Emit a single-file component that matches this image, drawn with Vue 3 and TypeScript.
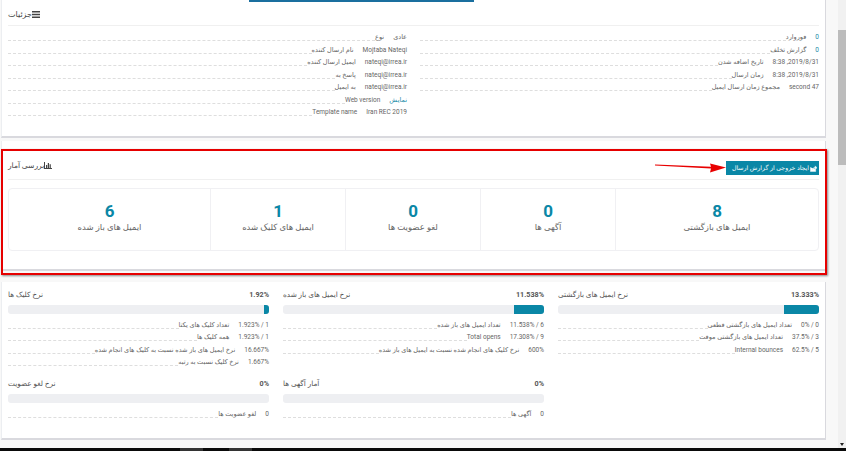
<script setup lang="ts">
interface Row { value: string; label: string; link?: boolean }
interface Metric { title: string; pct: string; fill: number; rows: Row[] }

const detailColumns: Row[][] = [
  [
    { value: '0', label: 'فوروارد', link: true },
    { value: '0', label: 'گزارش تخلف', link: true },
    { value: '2019/8/31, 8:38', label: 'تاریخ اضافه شدن' },
    { value: '2019/8/31, 8:38', label: 'زمان ارسال' },
    { value: '47 second', label: 'مجموع زمان ارسال ایمیل' },
  ],
  [
    { value: 'عادی', label: 'نوع' },
    { value: 'Mojtaba Nateqi', label: 'نام ارسال کننده' },
    { value: 'nateqi@irrea.ir', label: 'ایمیل ارسال کننده' },
    { value: 'nateqi@irrea.ir', label: 'پاسخ به' },
    { value: 'nateqi@irrea.ir', label: 'به ایمیل' },
    { value: 'نمایش', label: 'Web version', link: true },
    { value: 'Iran REC 2019', label: 'Template name' },
  ],
]

const stats = [
  { n: '8', label: 'ایمیل های بازگشتی' },
  { n: '0', label: 'آگهی ها' },
  { n: '0', label: 'لغو عضویت ها' },
  { n: '1', label: 'ایمیل های کلیک شده' },
  { n: '6', label: 'ایمیل های باز شده' },
]

const metrics: Metric[] = [
  {
    title: 'نرخ ایمیل های بازگشتی', pct: '13.333%', fill: 13.333,
    rows: [
      { value: '0 / 0%', label: 'تعداد ایمیل های بازگشتی قطعی' },
      { value: '3 / 37.5%', label: 'تعداد ایمیل های بازگشتی موقت' },
      { value: '5 / 62.5%', label: 'Internal bounces' },
    ],
  },
  {
    title: 'نرخ ایمیل های باز شده', pct: '11.538%', fill: 11.538,
    rows: [
      { value: '6 / 11.538%', label: 'تعداد ایمیل های باز شده' },
      { value: '9 / 17.308%', label: 'Total opens' },
      { value: '600%', label: 'نرخ کلیک های انجام شده نسبت به ایمیل های باز شده' },
    ],
  },
  {
    title: 'نرخ کلیک ها', pct: '1.92%', fill: 1.92,
    rows: [
      { value: '1 / 1.923%', label: 'تعداد کلیک های یکتا' },
      { value: '1 / 1.923%', label: 'همه کلیک ها' },
      { value: '16.667%', label: 'نرخ ایمیل های باز شده نسبت به کلیک های انجام شده' },
      { value: '1.667%', label: 'نرخ کلیک نسبت به رتبه' },
    ],
  },
]

const lowerMetrics: (Metric | null)[] = [
  null,
  { title: 'آمار آگهی ها', pct: '0%', fill: 0, rows: [{ value: '0', label: 'آگهی ها' }] },
  { title: 'نرخ لغو عضویت', pct: '0%', fill: 0, rows: [{ value: '0', label: 'لغو عضویت ها' }] },
]
const allMetrics = [...metrics, ...lowerMetrics]
</script>

<template>
  <div class="screen">
    <div class="viewport">
      <main class="page">
        <section class="card card-details">
          <div class="tab-line"></div>
          <header class="head head-details">
            <svg class="ico" viewBox="0 0 8 7" width="8" height="7"><path d="M0 0h8v1.5H0zM0 2.7h8v1.5H0zM0 5.4h8v1.5H0z" fill="#444" /></svg>
            <span class="head-title">جزئیات</span>
          </header>
          <div class="detail-grid">
            <div v-for="(col, c) in detailColumns" :key="c" class="detail-col">
              <div v-for="row in col" :key="row.label" class="row">
                <span class="val" :class="{ link: row.link }">{{ row.value }}</span>
                <span class="lab">{{ row.label }}</span>
                <span class="dash"></span>
              </div>
            </div>
          </div>
        </section>

        <section class="card card-stats">
          <header class="head head-stats">
            <button class="export" type="button">
              <svg viewBox="0 0 8 8" width="7" height="7"><path d="M0.5 2.5v5h6V5M3 5.5C3 3.5 4.5 2.5 6 2.5V1l2 2.2L6 5.2V3.8C5 3.8 3.8 4.2 3 5.5z" fill="#fff" stroke="#fff" stroke-width=".5" /></svg>
              <span>ایجاد خروجی از گزارش ارسال</span>
            </button>
            <div class="stats-title">
              <svg class="ico" viewBox="0 0 8 7" width="8" height="7"><path d="M0 0h1v6h7v1H0zM2 3h1.2v3H2zM3.8 1h1.2v5H3.8zM5.6 2.2h1.2V6H5.6z" fill="#444" /></svg>
              <span class="head-title small">بررسی آمار</span>
            </div>
          </header>
          <div class="stat-box">
            <div v-for="s in stats" :key="s.label" class="stat">
              <strong>{{ s.n }}</strong>
              <span>{{ s.label }}</span>
            </div>
          </div>
        </section>

        <section class="card card-metrics">
          <template v-for="(m, i) in allMetrics" :key="i">
            <div v-if="m" class="metric">
              <div class="metric-head">
                <b>{{ m.pct }}</b>
                <span>{{ m.title }}</span>
              </div>
              <div class="bar"><div class="fill" :style="{ width: m.fill + '%' }"></div></div>
              <div v-for="row in m.rows" :key="row.label" class="row">
                <span class="val">{{ row.value }}</span>
                <span class="lab">{{ row.label }}</span>
                <span class="dash"></span>
              </div>
            </div>
            <div v-else></div>
          </template>
        </section>
      </main>
      <aside class="scroll">
        <div class="thumb"></div>
        <div class="down"></div>
      </aside>
    </div>
    <footer class="taskbar">
      <span class="task first"></span>
      <span class="task"></span>
    </footer>

    <div class="red-box"></div>
    <svg class="arrow" viewBox="0 0 74 12" width="74" height="12">
      <path d="M0 1.6L56 3.8L55 0.5L71 4.5L55 9.5L56 5.4L0 2.6z" fill="#e80000" />
    </svg>
  </div>
</template>

<style>
html, body { margin: 0; padding: 0; background: #f8f8f8; overflow: hidden; }
</style>

<style scoped>
.screen {
  position: relative;
  width: 846px;
  height: 451px;
  overflow: hidden;
  font-family: Roboto, "DejaVu Sans", sans-serif;
  color: #555;
  background: #f8f8f8;
}
.viewport { display: flex; height: 448px; }
.page { width: 838px; flex: none; padding-left: 1px; box-sizing: border-box; }
.card {
  width: 825px;
  box-sizing: border-box;
  background: #fff;
  border-right: 1px solid #d9d9de;
  border-bottom: 2px solid #d9d9de;
  border-left: 1px solid #eceef1;
  padding: 0 6px;
}
.card-details { height: 138px; margin-bottom: 3px; }
.tab-line { width: 225px; height: 1.5px; margin-left: 241px; background: #1a6f9f; }
.head { box-sizing: border-box; border-bottom: 1px solid #f0f0f0; direction: rtl; display: flex; }
.head-details { height: 24px; padding-top: 3px; justify-content: flex-end; align-items: center; }
.head-title { font-size: 8px; color: #444; line-height: 11px; }
.head-title.small { font-size: 7.5px; }
.ico { flex: none; }
.detail-grid { display: grid; grid-template-columns: 399px 399px; justify-content: space-between; direction: rtl; padding-top: 3px; }
.detail-col { min-width: 0; }
.row { display: flex; height: 12.5px; align-items: flex-end; font-size: 6.5px; line-height: 7px; color: #666; direction: rtl; }
.row .val { flex: none; white-space: nowrap; padding-left: 9px; }
.row .lab { flex: none; white-space: nowrap; }
.row .dash { flex: 1; align-self: stretch; border-bottom: 1px dashed #dedede; }
.link { color: #1a8aa8; }

.card-stats { height: 130px; margin-bottom: 11px; }
.head-stats { height: 39px; padding-top: 19px; justify-content: space-between; align-items: flex-start; }
.stats-title { display: flex; align-items: center; height: 11px; }
.export {
  display: flex;
  align-items: center;
  gap: 1px;
  height: 14px;
  width: 93px;
  margin-top: 1px;
  padding: 0 2px 0 0;
  border: 0;
  background: #0a87a6;
  color: #fff;
  font: 6.2px Roboto, "DejaVu Sans", sans-serif;
  white-space: nowrap;
  overflow: hidden;
}
.stat-box {
  display: grid;
  grid-template-columns: 203px 135px 135px 135px 1fr;
  height: 63px;
  margin-top: 8px;
  direction: rtl;
  border: 1px solid #f0f0f3;
  border-radius: 4px;
  box-sizing: border-box;
}
.stat { display: flex; flex-direction: column; align-items: center; justify-content: center; border-left: 1px solid #f0f0f3; padding-bottom: 5px; }
.stat:last-child { border-left: 0; }
.stat strong { font-size: 17px; line-height: 20px; color: #0a87a6; font-weight: 700; }
.stat span { font-size: 8.5px; line-height: 12px; color: #666; }

.card-metrics {
  height: 158px;
  padding-top: 7px;
  display: grid;
  grid-template-columns: repeat(3, 261px);
  column-gap: 14px;
  grid-template-rows: 77px auto;
  row-gap: 12px;
  direction: rtl;
  align-content: start;
}
.metric { min-width: 0; }
.metric-head { display: flex; justify-content: space-between; height: 12px; line-height: 12px; font-size: 7.3px; color: #555; margin-bottom: 4px; }
.metric-head b { font-weight: 700; font-size: 7.2px; }
.bar { display: flex; height: 9px; background: #eeeff2; border-radius: 3px; overflow: hidden; margin-bottom: 2px; }
.fill { background: #0a87a6; }

.scroll { width: 8px; flex: none; background: #f1f1f1; display: flex; flex-direction: column; }
.thumb { height: 135px; margin-top: 30px; background: #bcbcbc; }
.down { width: 0; height: 0; margin: auto auto 2px; border: 2px solid transparent; border-top: 3px solid #222; border-bottom: 0; }
.taskbar { height: 3px; background: #0a0a0a; display: flex; }
.task { width: 23px; background: #333; margin-left: 26px; }
.task.first { margin-left: 180px; }

.red-box {
  position: absolute;
  left: 1px;
  top: 149px;
  width: 826px;
  height: 126px;
  box-sizing: border-box;
  border: 2px solid #e60000;
  box-shadow: 1px 1px 2px rgba(0, 0, 0, .45);
  pointer-events: none;
}
.arrow { position: absolute; left: 655px; top: 163px; }
</style>
